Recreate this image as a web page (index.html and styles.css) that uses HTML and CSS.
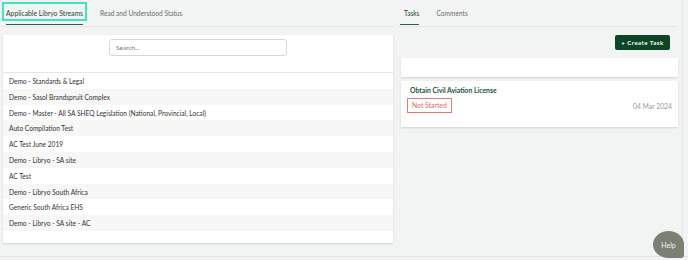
FILE: index.html
```html
<!DOCTYPE html>
<html lang="en">

<head>
    <meta charset="UTF-8">
    <meta name="viewport" content="width=device-width, initial-scale=1.0">
    <title>Libryo Streams</title>
    <link rel="stylesheet" href="styles.css">
</head>

<body>

    <div class="page">
        <div class="main">
            <div class="left-col">
                <div class="tabs">
                    <div class="tab active focused">Applicable Libryo Streams</div>
                    <div class="tab">Read and Understood Status</div>
                </div>
                <div class="card streams">
                    <div class="search-row">
                        <input type="text" class="search" placeholder="Search...">
                    </div>
                    <ul class="stream-list">
                        <li>Demo - Standards &amp; Legal</li>
                        <li>Demo - Sasol Brandspruit Complex</li>
                        <li>Demo - Master - All SA SHEQ Legislation (National, Provincial, Local)</li>
                        <li>Auto Compilation Test</li>
                        <li>AC Test June 2019</li>
                        <li>Demo - Libryo - SA site</li>
                        <li>AC Test</li>
                        <li>Demo - Libryo South Africa</li>
                        <li>Generic South Africa EHS</li>
                        <li>Demo - Libryo - SA site - AC</li>
                    </ul>
                </div>
            </div>
            <div class="right-col">
                <div class="tabs">
                    <div class="tab active">Tasks</div>
                    <div class="tab">Comments</div>
                </div>
                <div class="toolbar">
                    <button class="btn-create">+ Create Task</button>
                </div>
                <div class="card blank"></div>
                <div class="card task">
                    <div class="task-title">Obtain Civil Aviation License</div>
                    <div class="task-meta">
                        <span class="badge">Not Started</span>
                        <span class="task-date">04 Mar 2024</span>
                    </div>
                </div>
            </div>
            <div class="scroll-track"></div>
        </div>
        <div class="footer"></div>
    </div>

    <button class="help">Help</button>

</body>

</html>
```

FILE: styles.css
```css
body,
html {
    height: 100%;
    margin: 0;
    font-family: Lato, "Open Sans", sans-serif;
    background: #f1f4f3;
    color: #333;
    overflow: hidden;
}

* {
    box-sizing: border-box;
}

.page {
    display: flex;
    flex-direction: column;
    height: 100vh;
}

.main {
    display: flex;
    height: 256px;
}

.left-col {
    width: 393px;
}

.right-col {
    width: 280px;
    margin-left: 5px;
    margin-right: 4px;
}

.scroll-track {
    flex-grow: 1;
    border-left: 1px solid #e4e8e6;
}

.tabs {
    display: flex;
    height: 27px;
    border-bottom: 1px solid #e2e6e4;
}

.tab {
    font-size: 6.6px;
    color: #6b6b6b;
    padding: 9px 0 0;
    height: 25px;
}

.left-col .tab {
    margin-left: 6px;
}

.left-col .tab + .tab {
    margin-left: 17px;
}

.left-col .tab.active {
    font-size: 6.8px;
}

.right-col .tab {
    margin-left: 17px;
}

.right-col .tab.active {
    margin-left: 2px;
    padding-left: 4px;
}

.tab.active {
    color: #1f4a33;
    border-bottom: 1px solid #2f5d44;
}

.tab.focused {
    position: relative;
}

.tab.focused::before {
    content: "";
    position: absolute;
    left: -4px;
    right: -4px;
    top: 2px;
    bottom: 3px;
    border: 2px solid #3ee6c1;
}

.card {
    background: #fff;
    box-shadow: 0 1px 2px rgba(0, 0, 0, 0.12);
}

.streams {
    margin: 8px 0 0 3px;
    height: 208px;
}

.search-row {
    display: flex;
    justify-content: center;
    padding: 4px 0 16px;
    border-bottom: 1px solid #e6e6e6;
}

.search {
    width: 178px;
    height: 17px;
    font: inherit;
    font-size: 6.5px;
    padding: 0 6px;
    border: 1px solid #d8d8d8;
    border-radius: 3px;
    color: #555;
}

.search::placeholder {
    color: #777;
}

.stream-list {
    list-style: none;
    margin: 0;
    padding: 0;
}

.stream-list li {
    height: 15.8px;
    line-height: 16.6px;
    padding-left: 6px;
    font-size: 6.6px;
    color: #333;
}

.stream-list li:nth-child(even) {
    background: #f7f7f6;
}

.toolbar {
    display: flex;
    justify-content: flex-end;
    padding: 8px 8px 0 0;
    height: 31px;
}

.btn-create {
    background: #0d4627;
    color: #fff;
    border: 0;
    border-radius: 2px;
    font: inherit;
    font-size: 6px;
    font-weight: 700;
    letter-spacing: 0.5px;
    width: 55px;
    height: 15px;
    padding: 0;
}

.blank {
    margin-left: 3px;
    height: 19px;
}

.task {
    margin: 4px 0 0 3px;
    height: 46px;
    padding: 5px 6px 0 9px;
}

.task-title {
    font-size: 6.8px;
    font-weight: 700;
    color: #21513a;
}

.task-meta {
    display: flex;
    justify-content: space-between;
    align-items: center;
    margin-top: 4px;
    margin-left: -3px;
}

.badge {
    font-size: 6.8px;
    color: #e06a62;
    border: 1px solid #e57a72;
    padding: 2px 4px 3px;
}

.task-date {
    font-size: 6.8px;
    color: #9a9a9a;
    margin-top: 1px;
}

.footer {
    border-top: 1px solid #e0e4e2;
    flex-grow: 1;
}

.help {
    position: fixed;
    left: 653px;
    top: 231px;
    width: 31px;
    height: 27px;
    border: 0;
    border-radius: 50% 50% 3px 50%;
    background: #7b8074;
    color: #f2f2f2;
    font: inherit;
    font-size: 7px;
    padding: 0;
}
```
